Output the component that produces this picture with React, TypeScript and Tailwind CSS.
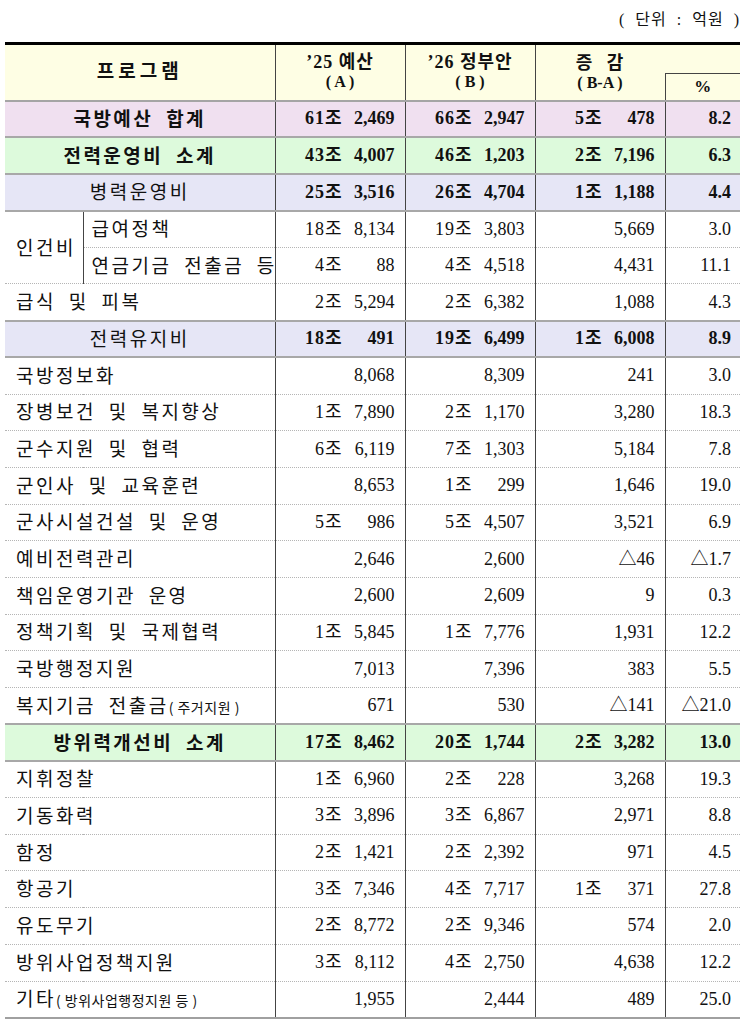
import React from "react";

type Kind = "total" | "sub" | "group" | "normal";

type Row = {
	label: string;
	note?: string;
	kind: Kind;
	a: string;
	b: string;
	d: string;
	p: string;
	sub?: "first" | "second";
};

const rows: Row[] = [
	{ label: "국방예산 합계", kind: "total", a: "61조 2,469", b: "66조 2,947", d: "5조 478", p: "8.2" },
	{ label: "전력운영비 소계", kind: "sub", a: "43조 4,007", b: "46조 1,203", d: "2조 7,196", p: "6.3" },
	{ label: "병력운영비", kind: "group", a: "25조 3,516", b: "26조 4,704", d: "1조 1,188", p: "4.4" },
	{ label: "급여정책", kind: "normal", sub: "first", a: "18조 8,134", b: "19조 3,803", d: "5,669", p: "3.0" },
	{ label: "연금기금 전출금 등", kind: "normal", sub: "second", a: "4조 88", b: "4조 4,518", d: "4,431", p: "11.1" },
	{ label: "급식 및 피복", kind: "normal", a: "2조 5,294", b: "2조 6,382", d: "1,088", p: "4.3" },
	{ label: "전력유지비", kind: "group", a: "18조 491", b: "19조 6,499", d: "1조 6,008", p: "8.9" },
	{ label: "국방정보화", kind: "normal", a: "8,068", b: "8,309", d: "241", p: "3.0" },
	{ label: "장병보건 및 복지향상", kind: "normal", a: "1조 7,890", b: "2조 1,170", d: "3,280", p: "18.3" },
	{ label: "군수지원 및 협력", kind: "normal", a: "6조 6,119", b: "7조 1,303", d: "5,184", p: "7.8" },
	{ label: "군인사 및 교육훈련", kind: "normal", a: "8,653", b: "1조 299", d: "1,646", p: "19.0" },
	{ label: "군사시설건설 및 운영", kind: "normal", a: "5조 986", b: "5조 4,507", d: "3,521", p: "6.9" },
	{ label: "예비전력관리", kind: "normal", a: "2,646", b: "2,600", d: "△46", p: "△1.7" },
	{ label: "책임운영기관 운영", kind: "normal", a: "2,600", b: "2,609", d: "9", p: "0.3" },
	{ label: "정책기획 및 국제협력", kind: "normal", a: "1조 5,845", b: "1조 7,776", d: "1,931", p: "12.2" },
	{ label: "국방행정지원", kind: "normal", a: "7,013", b: "7,396", d: "383", p: "5.5" },
	{ label: "복지기금 전출금", note: "( 주거지원 )", kind: "normal", a: "671", b: "530", d: "△141", p: "△21.0" },
	{ label: "방위력개선비 소계", kind: "sub", a: "17조 8,462", b: "20조 1,744", d: "2조 3,282", p: "13.0" },
	{ label: "지휘정찰", kind: "normal", a: "1조 6,960", b: "2조 228", d: "3,268", p: "19.3" },
	{ label: "기동화력", kind: "normal", a: "3조 3,896", b: "3조 6,867", d: "2,971", p: "8.8" },
	{ label: "함정", kind: "normal", a: "2조 1,421", b: "2조 2,392", d: "971", p: "4.5" },
	{ label: "항공기", kind: "normal", a: "3조 7,346", b: "4조 7,717", d: "1조 371", p: "27.8" },
	{ label: "유도무기", kind: "normal", a: "2조 8,772", b: "2조 9,346", d: "574", p: "2.0" },
	{ label: "방위사업정책지원", kind: "normal", a: "3조 8,112", b: "4조 2,750", d: "4,638", p: "12.2" },
	{ label: "기타", note: "( 방위사업행정지원 등 )", kind: "normal", a: "1,955", b: "2,444", d: "489", p: "25.0" },
];

const bgOf: Record<Kind, string> = {
	total: "bg-[#f0e0f0]",
	sub: "bg-[#ddfadc]",
	group: "bg-[#e6e6f6]",
	normal: "bg-white",
};

const Amount = ({ value }: { value: string }) => {
	const parts = value.split(" ");
	const jo = parts.length > 1 ? parts[0] : "";
	const rest = parts.length > 1 ? parts[1] : parts[0];
	return (
		<div className="flex justify-end items-baseline">
			{jo && <span className="tracking-[1px]">{jo}</span>}
			<span className="min-w-[52px] text-right">{rest}</span>
		</div>
	);
};

const App = () => {
	return (
		<div className="w-[756px] h-[1024px] bg-white text-[#111] font-['Liberation_Serif','Noto_Sans_CJK_KR',serif]">
			{/* 단위 */}
			<div className="pt-[8px] pr-[16px] h-[42px] text-right text-[16px] tracking-[1px] [word-spacing:5px]">
				( 단위 : 억원 )
			</div>

			<table className="ml-[5px] w-[735px] table-fixed border-collapse text-[18px]">
				<colgroup>
					<col className="w-[78px]" />
					<col className="w-[192px]" />
					<col className="w-[130px]" />
					<col className="w-[130px]" />
					<col className="w-[130px]" />
					<col className="w-[75px]" />
				</colgroup>
				<thead>
					<tr className="h-[30px] bg-[#fefee4]">
						<th
							colSpan={2}
							rowSpan={2}
							className="border-t-[3px] border-t-black border-b-2 border-b-[#a5a5a5] font-bold text-[19px] tracking-[4px]"
						>
							프로그램
						</th>
						<th
							rowSpan={2}
							className="border-t-[3px] border-t-black border-b-2 border-b-[#a5a5a5] border-l border-l-[#444] font-bold leading-[20px]"
						>
							<div className="tracking-[1px]">’25 예산</div>
							<div className="text-[16px]">( A )</div>
						</th>
						<th
							rowSpan={2}
							className="border-t-[3px] border-t-black border-b-2 border-b-[#a5a5a5] border-l border-l-[#444] font-bold leading-[20px]"
						>
							<div className="tracking-[1px]">’26 정부안</div>
							<div className="text-[16px]">( B )</div>
						</th>
						<th
							colSpan={2}
							className="border-t-[3px] border-t-black border-l border-l-[#444] font-bold align-bottom leading-[20px]"
						>
							<div className="w-[130px] text-center tracking-[2px] [word-spacing:6px]">증 감</div>
						</th>
					</tr>
					<tr className="h-[27px] bg-[#fefee4]">
						<th className="border-l border-l-[#444] border-b-2 border-b-[#a5a5a5] font-bold align-top text-[16px] leading-[18px]">
							( B-A )
						</th>
						<th className="border-l border-l-[#444] border-t border-t-[#444] border-b-2 border-b-[#a5a5a5] font-bold text-[17px]">
							%
						</th>
					</tr>
				</thead>
				<tbody>
					{rows.map((r, i) => {
						const prev = i > 0 ? rows[i - 1] : undefined;
						const solid = !prev || prev.kind !== "normal" || r.kind !== "normal";
						const top = solid
							? "border-t-2 border-t-[#a8a8a8]"
							: "border-t border-t-[#b5b5b5] [border-top-style:dotted]";
						const bottom = i === rows.length - 1 ? "border-b-2 border-b-[#a0a0a0]" : "";
						const bold = r.kind !== "normal";
						const numWeight = bold ? "font-bold" : "font-normal";
						const labelBold = r.kind === "total" || r.kind === "sub";
						const centered = r.kind !== "normal";
						return (
							<tr key={i} className={`h-[36.7px] ${bgOf[r.kind]}`}>
								{r.sub === "first" && (
									<td
										rowSpan={2}
										className={`${top} border-r border-r-[#444] pl-[11px] text-left`}
									>
										<span className="font-['Noto_Sans_CJK_KR',sans-serif] text-[19px] tracking-[2.5px]">
											인건비
										</span>
									</td>
								)}
								<td
									colSpan={r.sub ? 1 : 2}
									className={`${top} ${bottom} ${
										centered ? "text-center" : r.sub ? "pl-[8px] text-left" : "pl-[11px] text-left"
									} whitespace-nowrap`}
								>
									<span
										className={`font-['Noto_Sans_CJK_KR',sans-serif] text-[19px] tracking-[2.5px] [word-spacing:6px] ${
											labelBold ? "font-bold" : "font-normal"
										}`}
									>
										{r.label}
									</span>
									{r.note && (
										<span className="font-['Noto_Sans_CJK_KR',sans-serif] text-[14px] tracking-[0.5px]">
											{r.note}
										</span>
									)}
								</td>
								<td className={`${top} ${bottom} border-l border-l-[#444] pr-[10px] ${numWeight}`}>
									<Amount value={r.a} />
								</td>
								<td className={`${top} ${bottom} border-l border-l-[#444] pr-[10px] ${numWeight}`}>
									<Amount value={r.b} />
								</td>
								<td className={`${top} ${bottom} border-l border-l-[#444] pr-[10px] ${numWeight}`}>
									<Amount value={r.d} />
								</td>
								<td className={`${top} ${bottom} border-l border-l-[#444] pr-[9px] text-right ${numWeight}`}>
									{r.p}
								</td>
							</tr>
						);
					})}
				</tbody>
			</table>
		</div>
	);
};

export default App;
